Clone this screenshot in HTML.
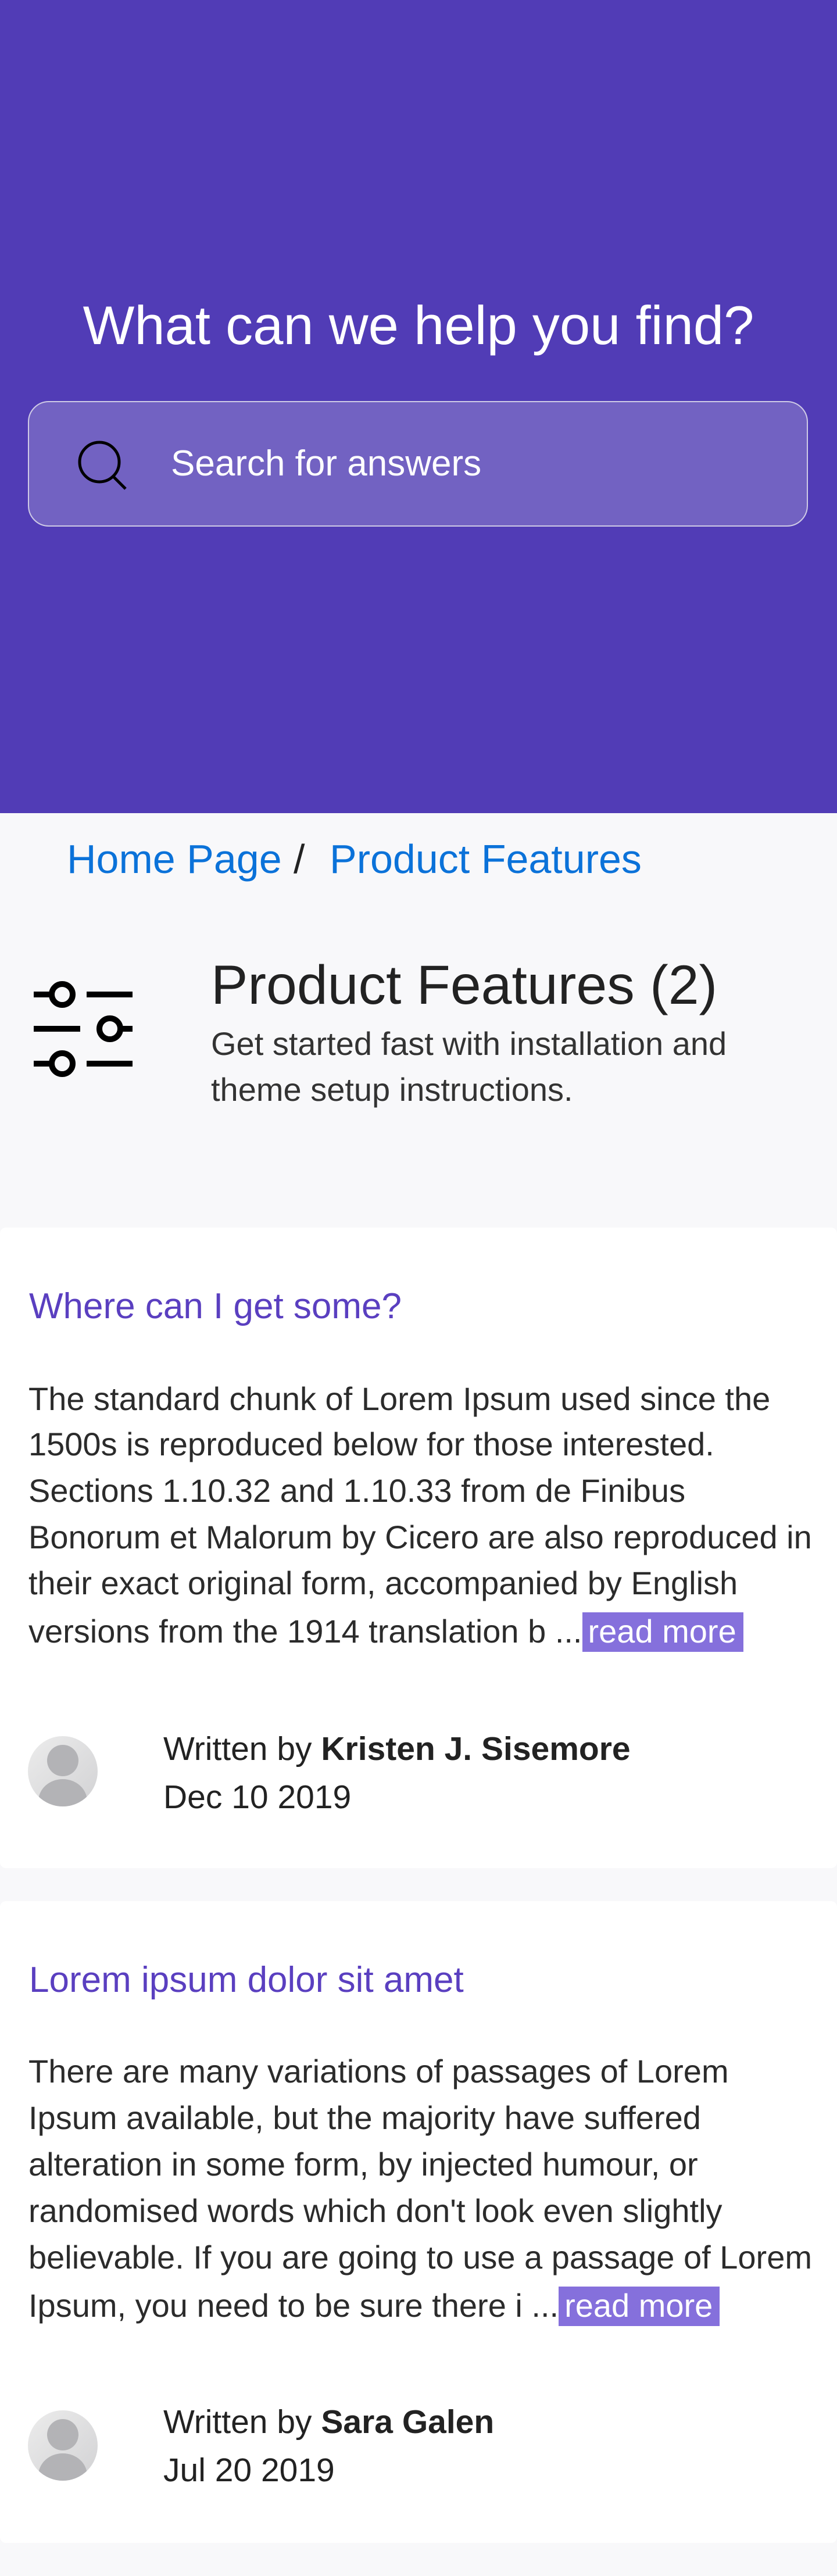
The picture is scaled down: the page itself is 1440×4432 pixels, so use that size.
<!DOCTYPE html>
<html><head><meta charset="utf-8">
<style>
*{margin:0;padding:0;box-sizing:border-box}
html,body{width:1440px;height:4432px;background:#f8f8fa;font-family:"Liberation Sans",Arial,sans-serif;overflow:hidden}
.a{position:absolute;line-height:1;white-space:nowrap}
.hero{position:absolute;left:0;top:0;width:1440px;height:1399px;background:#513cb6}
.search{position:absolute;left:48px;top:690px;width:1342px;height:216px;border:2px solid #cfcbe6;border-radius:36px;background:#7262c2}
.card{position:absolute;left:0;width:1440px;background:#fff;border-radius:10px}
.p{font-size:56px;color:#2b2b2b}
.t{font-size:62px;color:#5a3fc0}
.rm{display:inline-block;background:#8570dc;color:#fff;line-height:66px;height:68px;padding:0 12px 0 10px;vertical-align:baseline}
.auth{font-size:57px;color:#222}
</style></head><body>
<div class="hero"></div>
<div class="a" style="left:0;width:1440px;text-align:center;top:513px;font-size:94px;color:#fff">What can we help you find?</div>
<div class="search"></div>
<svg class="a" style="left:120px;top:745px" width="120" height="110" viewBox="120 745 120 110">
<circle cx="171" cy="795" r="34" fill="none" stroke="#000" stroke-width="5"/>
<line x1="196" y1="821" x2="216" y2="841" stroke="#000" stroke-width="5"/>
</svg>
<div class="a" style="left:294px;top:767px;font-size:62px;color:#fff">Search for answers</div>

<div class="a" style="left:115px;top:1443px;font-size:70px;color:#0b72d9">Home Page</div>
<div class="a" style="left:505px;top:1443px;font-size:70px;color:#222">/</div>
<div class="a" style="left:567px;top:1443px;font-size:70px;color:#0b72d9">Product Features</div>

<svg class="a" style="left:50px;top:1680px" width="190" height="185" viewBox="50 1680 190 185">
<g stroke="#000" stroke-width="10" fill="none">
<line x1="58" y1="1711" x2="87" y2="1711"/><circle cx="107" cy="1711" r="18"/><line x1="149" y1="1711" x2="228" y2="1711"/>
<line x1="58" y1="1770" x2="138" y2="1770"/><circle cx="189" cy="1770" r="18"/><line x1="209" y1="1770" x2="228" y2="1770"/>
<line x1="58" y1="1830" x2="87" y2="1830"/><circle cx="107" cy="1830" r="18"/><line x1="149" y1="1830" x2="228" y2="1830"/>
</g></svg>
<div class="a" style="left:363px;top:1648px;font-size:95px;color:#222">Product Features (2)</div>
<div class="a" style="left:363px;top:1768px;font-size:56px;color:#333">Get started fast with installation and</div>
<div class="a" style="left:363px;top:1847px;font-size:56px;color:#333">theme setup instructions.</div>

<div class="card" style="top:2112px;height:1102px"></div>
<div class="a t" style="left:50px;top:2217px">Where can I get some?</div>
<div class="a p" style="left:49px;top:2379px">The standard chunk of Lorem Ipsum used since the</div>
<div class="a p" style="left:49px;top:2457px">1500s is reproduced below for those interested.</div>
<div class="a p" style="left:49px;top:2537px">Sections 1.10.32 and 1.10.33 from de Finibus</div>
<div class="a p" style="left:49px;top:2617px">Bonorum et Malorum by Cicero are also reproduced in</div>
<div class="a p" style="left:49px;top:2696px">their exact original form, accompanied by English</div>
<div class="a p" style="left:49px;top:2774px">versions from the 1914 translation b ...<span class="rm">read more</span></div>
<svg class="a" style="left:48px;top:2987px" width="120" height="121" viewBox="0 0 120 121">
<defs><linearGradient id="g1" x1="0" y1="0" x2="1" y2="1"><stop offset="0" stop-color="#ececec"/><stop offset="1" stop-color="#d2d2d4"/></linearGradient><clipPath id="c1"><ellipse cx="60" cy="60.5" rx="60" ry="60.5"/></clipPath></defs>
<ellipse cx="60" cy="60.5" rx="60" ry="60.5" fill="url(#g1)"/>
<g clip-path="url(#c1)" fill="#b3b3b6"><ellipse cx="60" cy="42" rx="27" ry="27"/><ellipse cx="60" cy="112" rx="42" ry="38"/></g>
</svg>
<div class="a auth" style="left:281px;top:2981px">Written by <b>Kristen J. Sisemore</b></div>
<div class="a auth" style="left:281px;top:3064px">Dec 10 2019</div>

<div class="card" style="top:3271px;height:1104px"></div>
<div class="a t" style="left:50px;top:3376px">Lorem ipsum dolor sit amet</div>
<div class="a p" style="left:49px;top:3536px">There are many variations of passages of Lorem</div>
<div class="a p" style="left:49px;top:3616px">Ipsum available, but the majority have suffered</div>
<div class="a p" style="left:49px;top:3696px">alteration in some form, by injected humour, or</div>
<div class="a p" style="left:49px;top:3776px">randomised words which don't look even slightly</div>
<div class="a p" style="left:49px;top:3856px">believable. If you are going to use a passage of Lorem</div>
<div class="a p" style="left:49px;top:3934px">Ipsum, you need to be sure there i ...<span class="rm">read more</span></div>
<svg class="a" style="left:48px;top:4147px" width="120" height="121" viewBox="0 0 120 121">
<defs><linearGradient id="g2" x1="0" y1="0" x2="1" y2="1"><stop offset="0" stop-color="#ececec"/><stop offset="1" stop-color="#d2d2d4"/></linearGradient><clipPath id="c2"><ellipse cx="60" cy="60.5" rx="60" ry="60.5"/></clipPath></defs>
<ellipse cx="60" cy="60.5" rx="60" ry="60.5" fill="url(#g2)"/>
<g clip-path="url(#c2)" fill="#b3b3b6"><ellipse cx="60" cy="42" rx="27" ry="27"/><ellipse cx="60" cy="112" rx="42" ry="38"/></g>
</svg>
<div class="a auth" style="left:281px;top:4139px">Written by <b>Sara Galen</b></div>
<div class="a auth" style="left:281px;top:4222px">Jul 20 2019</div>
</body></html>
